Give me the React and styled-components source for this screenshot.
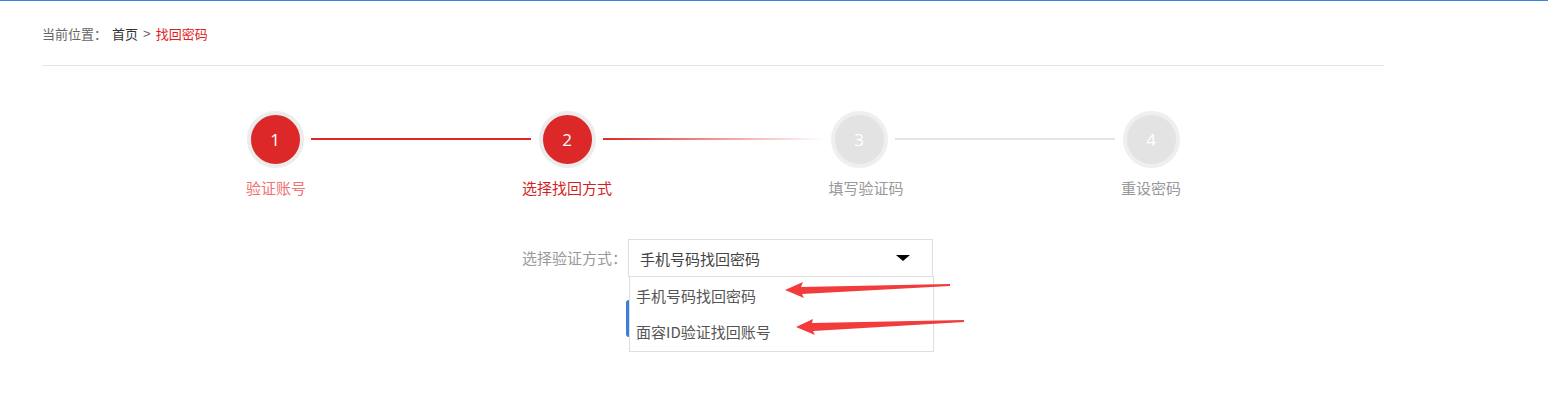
import React, { useState } from 'react';
import styled, { createGlobalStyle } from 'styled-components';

const GlobalStyle = createGlobalStyle`
  body {
    margin: 0;
    background: #fff;
    font-family: "Noto Sans CJK SC", "Noto Sans", sans-serif;
  }
`;

const steps = [
  { num: 1, label: '验证账号', state: 'done', shift: 1 },
  { num: 2, label: '选择找回方式', state: 'active', shift: 0 },
  { num: 3, label: '填写验证码', state: 'todo', shift: 7 },
  { num: 4, label: '重设密码', state: 'todo', shift: 0 },
];

const options = ['手机号码找回密码', '面容ID验证找回账号'];

const App = () => {
  const [value, setValue] = useState(options[0]);

  return (
    <Page>
      <GlobalStyle />
      <Container>
        <Breadcrumb>
          <CrumbLabel>当前位置：</CrumbLabel>
          <CrumbLink>首页</CrumbLink>
          <CrumbSep>&gt;</CrumbSep>
          <CrumbCurrent>找回密码</CrumbCurrent>
        </Breadcrumb>

        <Steps>
          {steps.map((step, i) => (
            <React.Fragment key={step.num}>
              {i > 0 && <StepLine $state={steps[i - 1].state} />}
              <Step>
                <Circle $state={step.state}>{step.num}</Circle>
                <StepLabel $state={step.state} $shift={step.shift}>
                  {step.label}
                </StepLabel>
              </Step>
            </React.Fragment>
          ))}
        </Steps>

        <FormArea>
          <FormRow>
            <FieldLabel>选择验证方式：</FieldLabel>
            <SelectWrap>
              <SelectBox>
                <span>{value}</span>
                <Caret />
              </SelectBox>
              <Dropdown>
                {options.map((opt) => (
                  <Option key={opt} onClick={() => setValue(opt)}>
                    {opt}
                  </Option>
                ))}
              </Dropdown>
            </SelectWrap>
          </FormRow>
          {/* next button sits under the open dropdown, only its edge shows */}
          <NextBtn aria-label="下一步" />

          <Arrows width="1548" height="400" viewBox="0 0 1548 400">
            <path d="M785 289 L803 281 L801 286 L950 283 L950 285 L802 293 L804 297 Z" fill="#f23b3b" />
            <path d="M796 326 L813 318 L812 322 L964 319 L964 321 L813 330 L815 334 Z" fill="#f23b3b" />
          </Arrows>
        </FormArea>
      </Container>
    </Page>
  );
};

const Page = styled.div`
  border-top: 1px solid #3a84e0;
  min-height: 399px;
  position: relative;
`;

const Container = styled.div`
  width: 1342px;
  margin-left: 42px;
`;

const Breadcrumb = styled.div`
  display: flex;
  align-items: center;
  gap: 5px;
  padding-top: 23px;
  padding-bottom: 21px;
  border-bottom: 1px solid #e5e5e5;
  font-size: 13px;
  line-height: 20px;
`;

const CrumbLabel = styled.span`
  color: #666;
`;

const CrumbLink = styled.span`
  color: #333;
`;

const CrumbSep = styled.span`
  color: #666;
  font-family: "Liberation Sans", sans-serif;
`;

const CrumbCurrent = styled.span`
  color: #e02020;
`;

const Steps = styled.div`
  display: flex;
  justify-content: center;
  align-items: flex-start;
  margin-top: 45px;
`;

const Step = styled.div`
  display: flex;
  flex-direction: column;
  align-items: center;
  width: 56px;
`;

const Circle = styled.div`
  box-sizing: border-box;
  width: 57px;
  height: 57px;
  border-radius: 50%;
  border: 4px solid ${(p) => (p.$state === 'todo' ? '#efefef' : '#ececec')};
  background: ${(p) => (p.$state === 'todo' ? '#e3e3e3' : '#dc2828')};
  color: #fff;
  display: flex;
  align-items: center;
  justify-content: center;
  font-family: "Open Sans", "Liberation Sans", sans-serif;
  font-size: 17px;
`;

const StepLabel = styled.div`
  margin-top: 10px;
  margin-left: ${(p) => p.$shift * 2}px;
  white-space: nowrap;
  font-size: 15px;
  line-height: 20px;
  color: ${(p) =>
    p.$state === 'done' ? '#f07272' : p.$state === 'active' ? '#d41f1f' : '#999'};
`;

const StepLine = styled.div`
  width: 220px;
  height: 2px;
  margin: 27px 8px 0;
  background: ${(p) =>
    p.$state === 'done'
      ? '#dc2828'
      : p.$state === 'active'
      ? 'linear-gradient(to right, #dc2828, rgba(220, 40, 40, 0))'
      : '#e4e4e4'};
`;

const FormArea = styled.div`
  margin-top: 41px;
`;

const FormRow = styled.div`
  display: flex;
  align-items: center;
  padding-left: 480px;
`;

const FieldLabel = styled.span`
  width: 106px;
  font-size: 15px;
  color: #999;
  line-height: 20px;
`;

const SelectWrap = styled.div`
  position: relative;
`;

const SelectBox = styled.div`
  box-sizing: border-box;
  width: 305px;
  height: 38px;
  border: 1px solid #dedede;
  padding: 0 22px 0 11px;
  display: flex;
  align-items: center;
  justify-content: space-between;
  font-size: 15px;
  color: #444;
  background: #fff;
`;

const Caret = styled.span`
  width: 0;
  height: 0;
  border-left: 7px solid transparent;
  border-right: 7px solid transparent;
  border-top: 6px solid #000;
`;

const Dropdown = styled.div`
  position: absolute;
  top: 37px;
  left: 1px;
  z-index: 5;
  box-sizing: border-box;
  width: 305px;
  padding: 1px 0;
  border: 1px solid #dedede;
  background: #fff;
`;

const Option = styled.div`
  height: 36px;
  line-height: 36px;
  padding-left: 6px;
  font-size: 15px;
  color: #555;
  cursor: pointer;
`;

const NextBtn = styled.button`
  display: block;
  width: 300px;
  height: 37px;
  margin: 23px 0 0 584px;
  border: none;
  border-radius: 3px;
  background: #3b7ddd;
`;

const Arrows = styled.svg`
  position: absolute;
  left: 0;
  top: 0;
  z-index: 6;
  pointer-events: none;
`;

export default App;
